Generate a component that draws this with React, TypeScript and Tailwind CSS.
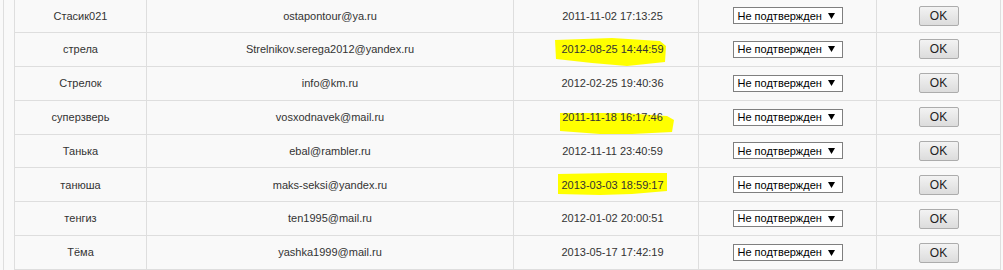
import React from "react";

type Row = { name: string; email: string; date: string; mark?: string };

const rows: Row[] = [
  { name: "Стасик021", email: "ostapontour@ya.ru", date: "2011-11-02 17:13:25" },
  {
    name: "стрела",
    email: "Strelnikov.serega2012@yandex.ru",
    date: "2012-08-25 14:44:59",
    mark: "M3,5 L60,3 L108,6 L114,11 L113,27 L75,31 L40,28 L4,24 Z",
  },
  { name: "Стрелок", email: "info@km.ru", date: "2012-02-25 19:40:36" },
  {
    name: "суперзверь",
    email: "vosxodnavek@mail.ru",
    date: "2011-11-18 16:17:46",
    mark: "M8,10 L70,10 L115,13 L122,17 L120,29 L80,31 L48,31 L8,28 Z",
  },
  { name: "Танька", email: "ebal@rambler.ru", date: "2012-11-11 23:40:59" },
  {
    name: "танюша",
    email: "maks-seksi@yandex.ru",
    date: "2013-03-03 18:59:17",
    mark: "M6,4 L60,3 L115,3 L115,21 L80,24 L48,25 L6,24 Z",
  },
  { name: "тенгиз", email: "ten1995@mail.ru", date: "2012-01-02 20:00:51" },
  { name: "Тёма", email: "yashka1999@mail.ru", date: "2013-05-17 17:42:19" },
];

function StatusSelect() {
  return (
    <div className="flex h-[17px] w-[110px] items-center justify-between whitespace-nowrap border border-[#7f7f7f] bg-white pl-[4px] pr-[7px] text-[11px] text-black">
      <span>Не подтвержден</span>
      <svg width="7" height="6" viewBox="0 0 7 6">
        <path d="M0,0 L7,0 L3.5,6 Z" fill="#000" />
      </svg>
    </div>
  );
}

function OkButton() {
  return (
    <div className="flex h-[20px] w-[40px] items-center justify-center rounded-[2px] border border-[#acacac] bg-gradient-to-b from-[#f3f3f3] to-[#dcdcdc] text-[12px] text-[#222]">
      OK
    </div>
  );
}

export default function App() {
  return (
    <div
      className="flex h-[270px] w-[1003px] overflow-hidden bg-[#f9f9f9] text-[11px] text-[#333]"
      style={{ fontFamily: '"Liberation Sans", Arial, sans-serif' }}
    >
      <div className="w-[3px] shrink-0" />
      <div className="w-[11px] shrink-0 border-l border-[#dedede]" />
      <div className="flex shrink-0 flex-col border-l border-[#dedede]">
        {rows.map((r, i) => (
          <div
            key={i}
            className={`flex border-b border-[#dedede] ${i === 0 ? "h-[33px]" : "h-[34px]"}`}
          >
            <div className="flex w-[132px] items-center justify-center border-r border-[#dedede]">
              {r.name}
            </div>
            <div className="flex w-[367px] items-center justify-center border-r border-[#dedede]">
              {r.email}
            </div>
            <div className="relative flex w-[185px] items-center justify-center border-r border-[#dedede] pl-[13px]">
              {r.mark && (
                <svg
                  className="absolute left-[38px] top-[2px]"
                  width="125"
                  height="34"
                  viewBox="0 0 125 34"
                >
                  <path d={r.mark} fill="#ffff00" />
                </svg>
              )}
              <span className="relative">{r.date}</span>
            </div>
            <div className="flex w-[178px] items-center justify-center border-r border-[#dedede]">
              <StatusSelect />
            </div>
            <div className="flex w-[124px] items-center justify-center border-r border-[#dedede]">
              <OkButton />
            </div>
          </div>
        ))}
      </div>
    </div>
  );
}
